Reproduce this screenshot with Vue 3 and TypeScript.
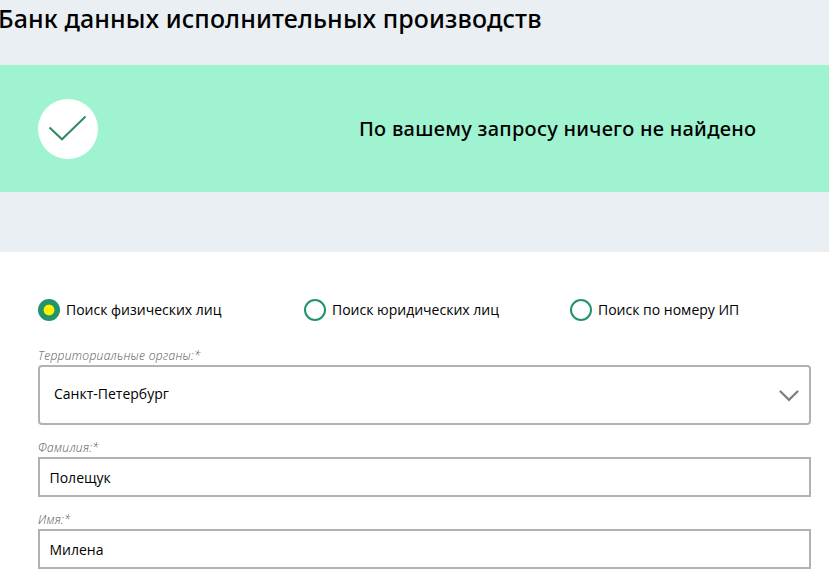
<script setup lang="ts">
import { ref } from 'vue'

const modes = ['Поиск физических лиц', 'Поиск юридических лиц', 'Поиск по номеру ИП']
const mode = ref(0)
const surname = ref('Полещук')
const firstName = ref('Милена')
</script>

<template>
  <main class="page">
    <h1>Банк данных исполнительных производств</h1>
    <section class="notice">
      <div class="badge">
        <svg width="60" height="60" viewBox="0 0 60 60"><path d="M11.5 28.5 24 40.3 47.5 17.5" fill="none" stroke="#2e8b62" stroke-width="2" /></svg>
      </div>
      <p>По вашему запросу ничего не найдено</p>
    </section>
    <form class="form">
      <div class="modes">
        <label v-for="(name, i) in modes" :key="name" class="mode" @click="mode = i">
          <span class="radio" :class="{ on: mode === i }"></span>
          <span class="name">{{ name }}</span>
        </label>
      </div>
      <div class="caption first">Территориальные органы:*</div>
      <div class="select">
        <span>Санкт-Петербург</span>
        <svg width="20" height="12" viewBox="0 0 20 12"><path d="M1.5 1.5 10 9.8 18.5 1.5" fill="none" stroke="#808080" stroke-width="2.3" stroke-linecap="round" /></svg>
      </div>
      <div class="caption">Фамилия:*</div>
      <input v-model="surname" class="field" />
      <div class="caption">Имя:*</div>
      <input v-model="firstName" class="field" />
    </form>
  </main>
</template>

<style>
body { margin: 0; overflow: hidden; }
</style>
<style scoped>
.page { height: 579px; overflow: hidden; background: #e9eff2; color: #000; font-family: 'Open Sans', 'Noto Sans', sans-serif; }
h1 { margin: 0; height: 65px; margin-left: -2px; font-family: 'Noto Sans', 'Open Sans', sans-serif; font-size: 25px; font-weight: 500; letter-spacing: 0.12px; line-height: 37px; white-space: nowrap; }
.notice { box-sizing: border-box; display: flex; align-items: center; height: 127px; padding-left: 38px; background: #9ff3d1; }
.badge { flex: none; width: 60px; height: 60px; border-radius: 50%; background: #fff; }
.notice p { margin: 0 0 0 261px; font-family: 'Noto Sans', 'Open Sans', sans-serif; font-size: 20px; font-weight: 500; letter-spacing: 0.27px; white-space: nowrap; }
.form { box-sizing: border-box; height: 327px; margin-top: 60px; padding: 47px 18px 0 38px; background: #fff; }
.modes { display: grid; grid-template-columns: 266px 266px 1fr; height: 22px; }
.mode { display: flex; align-items: center; gap: 6px; font-size: 14px; white-space: nowrap; }
.name { padding-bottom: 2px; }
.radio { box-sizing: border-box; width: 22px; height: 22px; border: 2px solid #22936b; border-radius: 50%; }
.radio.on { border: 0; background: radial-gradient(circle, #fff000 5px, #22936b 5.8px); }
.caption { height: 16px; margin-top: 16px; color: #555; font-size: 12px; font-style: italic; font-weight: 300; letter-spacing: 0.3px; line-height: 14px; }
.caption.first { margin-top: 28px; }
.select { box-sizing: border-box; display: flex; align-items: center; justify-content: space-between; height: 60px; padding: 0 10px 0 14px; border: 2px solid #b2b2b2; border-radius: 4px; font-size: 14px; }
.select span { padding-bottom: 4px; }
.select svg { margin-top: 2px; }
.field { display: block; box-sizing: border-box; width: 100%; height: 40px; margin: 0; padding: 0 9.5px; border: 2px solid #b2b2b2; border-radius: 0; outline: 0; color: #000; font: 14px 'Open Sans', 'Noto Sans', sans-serif; }
</style>
